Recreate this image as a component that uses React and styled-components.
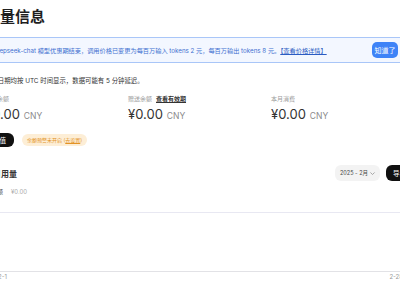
import React from 'react'
import styled, { createGlobalStyle } from 'styled-components';

const GlobalStyle = createGlobalStyle`
  body{
    margin:0;
    background:#fff;
    overflow:hidden;
    font-family:"Inter","Noto Sans CJK SC",sans-serif;
    color:#222;
  }
`;

const stats = [
  { label: '充值余额', value: '¥0.00' },
  { label: '赠送余额', value: '¥0.00', link: '查看有效期' },
  { label: '本月消费', value: '¥0.00' },
];

const App = () => {
  return (<>
    <GlobalStyle/>
    <Page>
      <Title>用量信息</Title>

      <Banner>
        <p>
          deepseek-chat 模型优惠期结束，调用价格已变更为每百万输入 tokens 2 元，每百万输出 tokens 8 元。<a>【查看价格详情】</a>
        </p>
        <BlueButton>知道了</BlueButton>
      </Banner>

      <Note>所有日期均按 UTC 时间显示，数据可能有 5 分钟延迟。</Note>

      <Stats>
        {stats.map((s)=>(
          <Stat key={s.label}>
            <Label>{s.label}{s.link && <u>{s.link}</u>}</Label>
            <Value>{s.value}<small>CNY</small></Value>
          </Stat>
        ))}
      </Stats>

      <Actions>
        <DarkButton>充值</DarkButton>
        <Badge>余额预警未开启 (<u>去设置</u>)</Badge>
      </Actions>

      <SectionHead>
        <h3>每日用量</h3>
        <Tools>
          <Select>2025 - 2月
            <svg width="7" height="7" viewBox="0 0 10 10"><path d="M2 3.5 5 6.5 8 3.5" fill="none" stroke="#999" strokeWidth="1.2"/></svg>
          </Select>
          <DarkButton $tall>导出</DarkButton>
        </Tools>
      </SectionHead>

      <Total>总金额<span>¥0.00</span></Total>

      <Chart/>
      <Axis>
        <span>2-1</span>
        <span>2-28</span>
      </Axis>
    </Page>
  </>)
};

const Page=styled.main`
  width:428px;
  margin-left:-15px;
  padding-top:7px;
`;

const Title=styled.h1`
  margin:0;
  font-size:15px;
  line-height:20px;
  font-weight:700;
  color:#1f1f1f;
`;

const Banner=styled.div`
  margin:10px 7px 0 0;
  height:26px;
  box-sizing:border-box;
  border:1.5px solid #a9c6f8;
  border-radius:6px;
  background:#f3f7ff;
  display:flex;
  align-items:center;
  justify-content:space-between;
  padding:0 7px 0 6px;

  p{
    margin:0;
    font-size:6.2px;
    color:#4170d0;
    white-space:nowrap;
  }
  a{
    color:#2a5bc2;
    text-decoration:underline;
  }
`;

const BlueButton=styled.button`
  border:none;
  background:#3e83f7;
  color:#fff;
  font-family:inherit;
  font-size:7px;
  height:16px;
  width:26px;
  padding:0;
  border-radius:5px;
`;

const Note=styled.p`
  margin:11px 0 0;
  font-size:6.4px;
  line-height:14px;
  color:#333;
`;

const Stats=styled.div`
  display:grid;
  grid-template-columns:143px 143px 1fr;
  margin-top:6px;
`;

const Stat=styled.div`
  display:flex;
  flex-direction:column;
`;

const Label=styled.div`
  font-size:6px;
  line-height:10px;
  color:#9a9a9a;
  display:flex;
  gap:4px;

  u{
    color:#333;
    font-weight:600;
  }
`;

const Value=styled.div`
  font-size:13px;
  line-height:20px;
  color:#333;

  small{
    font-size:8.5px;
    color:#8a8a8a;
    margin-left:4px;
  }
`;

const Actions=styled.div`
  display:flex;
  align-items:center;
  gap:8px;
  margin-top:7px;
`;

const DarkButton=styled.button`
  border:none;
  background:#111;
  color:#fff;
  font-family:inherit;
  font-size:6.5px;
  height:${p=>p.$tall ? '16px' : '14px'};
  padding:0;
  border-radius:6px;
  width:${p=>p.$tall ? '27px' : '29px'};
`;

const Badge=styled.span`
  background:#fdeed6;
  color:#e39325;
  font-size:5px;
  line-height:12px;
  padding:0 5px;
  border-radius:7px;

  u{
    text-decoration:underline;
  }
`;

const SectionHead=styled.div`
  display:flex;
  align-items:center;
  justify-content:space-between;
  margin-top:18px;

  h3{
    margin:0;
    font-size:8px;
    font-weight:600;
    color:#333;
  }
`;

const Tools=styled.div`
  display:flex;
  align-items:center;
  gap:6px;
`;

const Select=styled.div`
  height:16px;
  width:45px;
  box-sizing:border-box;
  background:#f3f3f3;
  border-radius:6px;
  font-size:5.5px;
  color:#444;
  white-space:nowrap;
  display:flex;
  align-items:center;
  justify-content:space-between;
  padding:0 4px 0 5px;
`;

const Total=styled.div`
  margin-top:5px;
  font-size:6px;
  line-height:12px;
  color:#444;
  display:flex;
  gap:8px;

  span{
    color:#aaa;
  }
`;

const Chart=styled.div`
  margin-top:14px;
  height:58px;
  border-top:1px solid #e8e8f2;
  border-bottom:1px solid #e2e2e6;
`;

const Axis=styled.div`
  display:flex;
  justify-content:space-between;
  padding:0 10px 0 13px;
  font-size:6px;
  line-height:10px;
  color:#999;
`;

export default App
